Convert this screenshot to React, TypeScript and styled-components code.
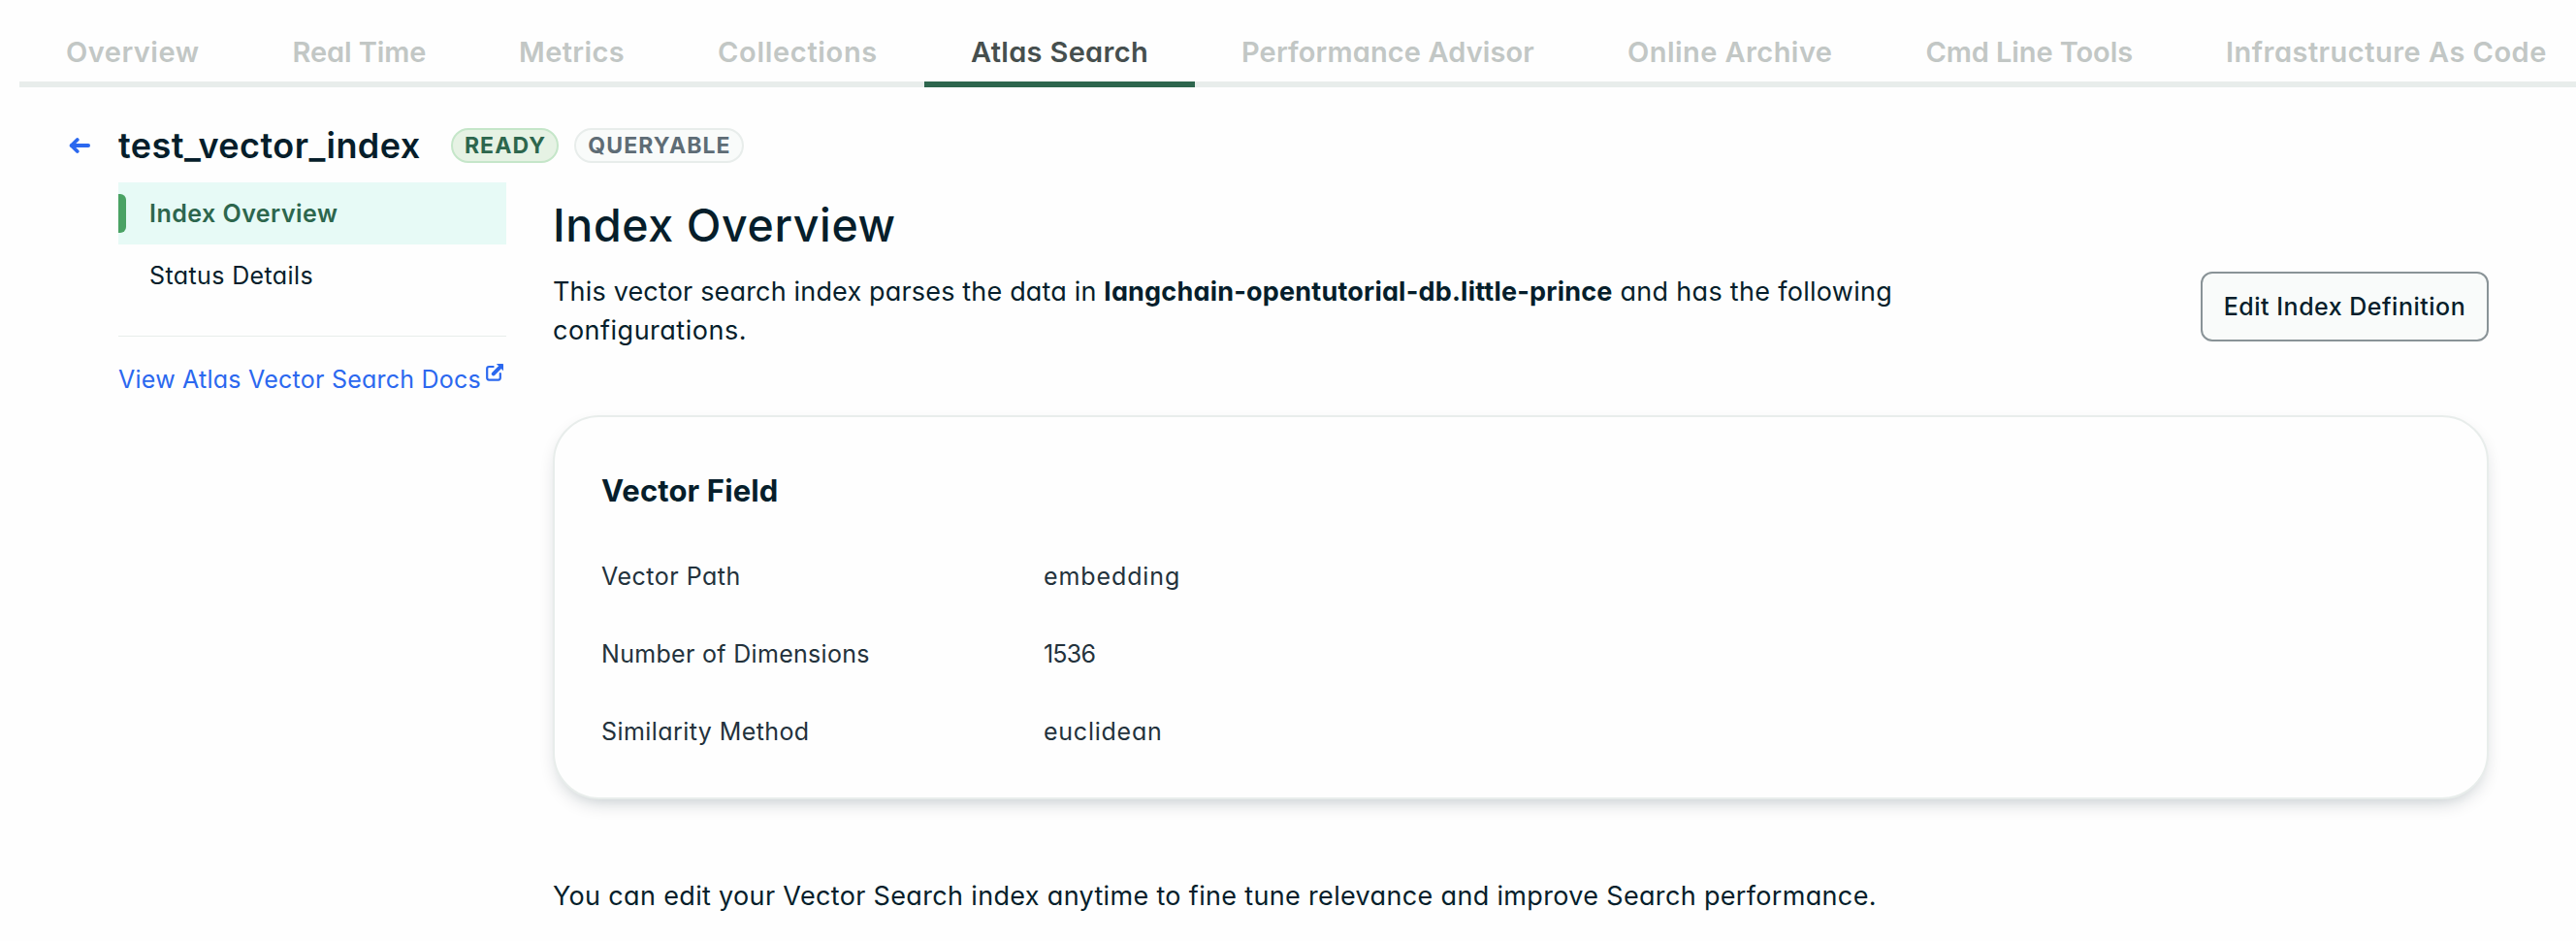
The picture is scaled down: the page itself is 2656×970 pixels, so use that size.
import React from 'react';
import styled, { createGlobalStyle } from 'styled-components';

const GlobalStyle = createGlobalStyle`
  * { box-sizing: border-box; }
  body {
    margin: 0;
    background: #fefefe;
    color: #061e2b;
    font-family: Inter, "Liberation Sans", sans-serif;
    font-feature-settings: "cv11";
    overflow: hidden;
  }
  h1, h2, h3, p, dl, dt, dd { margin: 0; }
`;

const Page = styled.div`
  width: 2656px;
  height: 970px;
  overflow: hidden;
`;

const TabBar = styled.nav`
  display: flex;
  height: 90px;
  margin-left: 20px;
  padding-top: 22px;
  box-shadow: inset 0 -6px 0 #e8edeb;
`;

const Tab = styled.a<{ $width: number; $tracking: number; $active?: boolean }>`
  flex: none;
  width: ${(p) => p.$width}px;
  height: 68px;
  padding-left: 48px;
  border-bottom: 6px solid ${(p) => (p.$active ? '#2d664d' : 'transparent')};
  color: ${(p) => (p.$active ? '#464f4e' : '#c2c7c5')};
  font-size: 29px;
  font-weight: 600;
  line-height: 64px;
  letter-spacing: ${(p) => p.$tracking}px;
  white-space: nowrap;
`;

const Header = styled.header`
  display: flex;
  align-items: center;
  height: 36px;
  margin-top: 42px;
  padding-left: 71px;
`;

const BackIcon = styled.svg`
  width: 22px;
  height: 18px;
  margin-right: 29px;
`;

const IndexName = styled.h1`
  width: 343px;
  font-size: 36px;
  font-weight: 600;
  line-height: 36px;
  letter-spacing: 0.45px;
`;

const Badge = styled.span<{ $tone: 'green' | 'gray'; $width: number }>`
  width: ${(p) => p.$width}px;
  height: 36px;
  margin-right: 16px;
  border: 2px solid ${(p) => (p.$tone === 'green' ? '#c5e6c9' : '#e8edeb')};
  border-radius: 18px;
  background: ${(p) => (p.$tone === 'green' ? '#e6f2e4' : '#f9fbfa')};
  color: ${(p) => (p.$tone === 'green' ? '#2d664d' : '#5e6c75')};
  font-size: 23px;
  font-weight: 700;
  line-height: 33px;
  letter-spacing: 1.1px;
  text-indent: 1px;
  text-align: center;
`;

const Body = styled.div`
  display: flex;
  gap: 48px;
  margin-top: 20px;
  padding-left: 122px;
`;

const Sidebar = styled.aside`
  width: 400px;
`;

const SideItem = styled.a<{ $active?: boolean }>`
  display: flex;
  align-items: center;
  height: 64px;
  background: ${(p) => (p.$active ? '#e7faf6' : 'transparent')};
  color: ${(p) => (p.$active ? '#2d664d' : 'inherit')};
  font-size: 25px;
  font-weight: ${(p) => (p.$active ? 600 : 400)};
  letter-spacing: ${(p) => (p.$active ? 0.48 : 0.38)}px;

  &::before {
    content: '';
    flex: none;
    width: 8px;
    height: 40px;
    margin-right: 24px;
    border-radius: 0 6px 6px 0;
    background: ${(p) => (p.$active ? '#4aa264' : 'transparent')};
  }
`;

const Divider = styled.hr`
  height: 1px;
  margin: 30px 0 24px;
  border: 0;
  background: #e8edeb;
`;

const DocsLink = styled.a`
  display: flex;
  height: 40px;
  color: #2b68ef;
  font-size: 25px;
  line-height: 41px;
  letter-spacing: 0.235px;
  white-space: nowrap;
`;

const ExternalIcon = styled.svg`
  width: 18px;
  height: 18px;
  margin: 4px 0 0 5px;
`;

const Main = styled.main`
  width: 1996px;
`;

const Title = styled.h2`
  height: 60px;
  margin-top: 14px;
  font-size: 46.5px;
  font-weight: 500;
  line-height: 60px;
  letter-spacing: 0.62px;
`;

const Intro = styled.div`
  display: flex;
  justify-content: space-between;
  height: 80px;
  margin-top: 18px;
`;

const Description = styled.p`
  width: 1420px;
  padding-top: 1px;
  font-size: 27px;
  line-height: 40px;
  letter-spacing: 0.17px;

  strong {
    font-weight: 700;
    letter-spacing: 0.2px;
  }
`;

const DescriptionEnd = styled.span<{ $tracking: number }>`
  letter-spacing: ${(p) => p.$tracking}px;
`;

const EditButton = styled.button`
  width: 297px;
  height: 72px;
  padding: 0;
  border: 2px solid #899397;
  border-radius: 12px;
  background: #f9fbfa;
  color: inherit;
  font: inherit;
  font-feature-settings: inherit;
  font-size: 25px;
  font-weight: 500;
  letter-spacing: 0.5px;
`;

const Card = styled.section`
  height: 396px;
  margin-top: 68px;
  padding: 56px 48px 0;
  border: 2px solid #e8edeb;
  border-radius: 48px;
  background: #fefefe;
  box-shadow: 0 8px 20px -8px rgba(0, 30, 43, 0.3);
`;

const CardTitle = styled.h3`
  height: 40px;
  margin-bottom: 48px;
  font-size: 31px;
  font-weight: 700;
  line-height: 40px;
  letter-spacing: 0.12px;
`;

const Fields = styled.dl`
  display: grid;
  grid-template-columns: 456px 1fr;
  grid-auto-rows: 40px;
  row-gap: 40px;
  color: #23323c;
  font-size: 25px;
  line-height: 40px;
`;

const FieldName = styled.dt<{ $tracking: number }>`
  letter-spacing: ${(p) => p.$tracking}px;
`;

const FieldValue = styled.dd<{ $tracking: number }>`
  letter-spacing: ${(p) => p.$tracking}px;
`;

const Footnote = styled.p`
  margin-top: 80px;
  font-size: 27px;
  line-height: 40px;
  letter-spacing: 0.335px;
`;

const tabs = [
  { label: 'Overview', width: 233.5, tracking: 0.49 },
  { label: 'Real Time', width: 233.5, tracking: -0.1 },
  { label: 'Metrics', width: 205, tracking: 0.38 },
  { label: 'Collections', width: 261, tracking: 0.69 },
  { label: 'Atlas Search', width: 279, tracking: 0.31, active: true },
  { label: 'Performance Advisor', width: 398, tracking: 0.12 },
  { label: 'Online Archive', width: 307.5, tracking: 0.44 },
  { label: 'Cmd Line Tools', width: 309.5, tracking: -0.09 },
  { label: 'Infrastructure As Code', width: 427, tracking: 0.49 },
];

const fields = [
  { name: 'Vector Path', value: 'embedding', nameTracking: 0.5, valueTracking: 0.9 },
  { name: 'Number of Dimensions', value: '1536', nameTracking: 0.31, valueTracking: -0.8 },
  { name: 'Similarity Method', value: 'euclidean', nameTracking: 0.42, valueTracking: 0.75 },
];

export default function App() {
  return (
    <Page>
      <GlobalStyle />
      <TabBar>
        {tabs.map((t) => (
          <Tab key={t.label} $width={t.width} $tracking={t.tracking} $active={t.active}>
            {t.label}
          </Tab>
        ))}
      </TabBar>
      <Header>
        <BackIcon viewBox="0 0 22 18" fill="none" stroke="#2b68ef" strokeLinecap="round" strokeLinejoin="round">
          <path d="M3 9H20" strokeWidth="4" />
          <path d="M8.7 3L2.6 9l6.1 6" strokeWidth="3.8" />
        </BackIcon>
        <IndexName>test_vector_index</IndexName>
        <Badge $tone="green" $width={111}>READY</Badge>
        <Badge $tone="gray" $width={175}>QUERYABLE</Badge>
      </Header>
      <Body>
        <Sidebar>
          <SideItem $active>Index Overview</SideItem>
          <SideItem>Status Details</SideItem>
          <Divider />
          <DocsLink>
            View Atlas Vector Search Docs
            <ExternalIcon viewBox="0 0 18 18" fill="none">
              <path
                d="M7.6 3H3.2Q1.2 3 1.2 5v9.6q0 2 2 2h9.6q2 0 2-2V10"
                stroke="#2b68ef"
                strokeWidth="2.2"
                strokeLinecap="round"
              />
              <path d="M7.8 10.4L14 4.2" stroke="#2b68ef" strokeWidth="4" strokeLinecap="round" />
              <path d="M10.8 0H17.4Q18 0 18 .6V7.2Z" fill="#2b68ef" />
            </ExternalIcon>
          </DocsLink>
        </Sidebar>
        <Main>
          <Title>Index Overview</Title>
          <Intro>
            <Description>
              This vector search index parses the data in{' '}
              <strong>langchain-opentutorial-db.little-prince</strong>
              <DescriptionEnd $tracking={0.3}> and has the following </DescriptionEnd>
              <DescriptionEnd $tracking={0.5}>configurations.</DescriptionEnd>
            </Description>
            <EditButton>Edit Index Definition</EditButton>
          </Intro>
          <Card>
            <CardTitle>Vector Field</CardTitle>
            <Fields>
              {fields.map((f) => (
                <React.Fragment key={f.name}>
                  <FieldName $tracking={f.nameTracking}>{f.name}</FieldName>
                  <FieldValue $tracking={f.valueTracking}>{f.value}</FieldValue>
                </React.Fragment>
              ))}
            </Fields>
          </Card>
          <Footnote>
            You can edit your Vector Search index anytime to fine tune relevance and improve Search performance.
          </Footnote>
        </Main>
      </Body>
    </Page>
  );
}
